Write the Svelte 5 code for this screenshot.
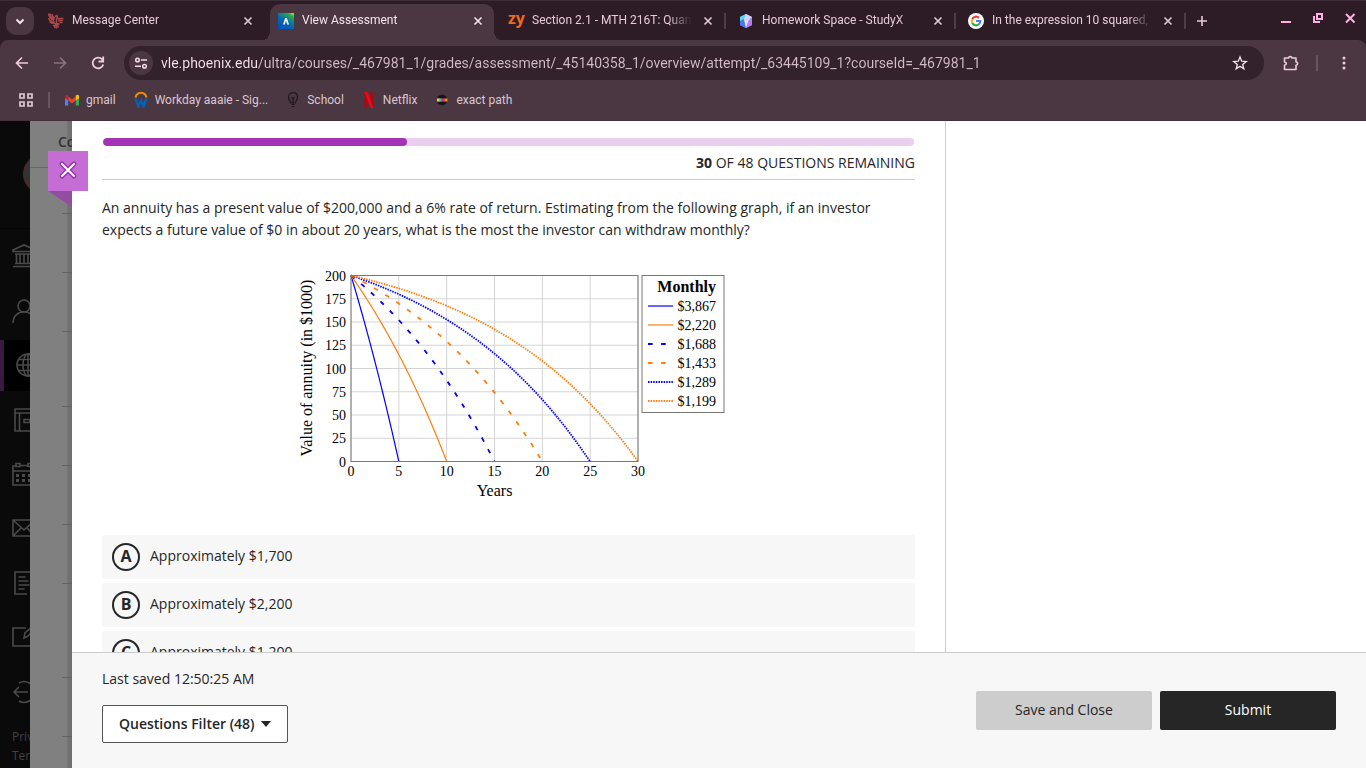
<script>
  const tabs = [
    { title: "Message Center", icon: "phoenix" },
    { title: "View Assessment", icon: "ultra", active: true },
    { title: "Section 2.1 - MTH 216T: Quan", icon: "zy", line: true },
    { title: "Homework Space - StudyX", icon: "studyx", line: true },
    { title: "In the expression 10 squared,", icon: "google", line: true },
  ];

  const bookmarks = [
    { label: "gmail", icon: "gmail" },
    { label: "Workday aaaie - Sig...", icon: "workday" },
    { label: "School", icon: "school" },
    { label: "Netflix", icon: "netflix" },
    { label: "exact path", icon: "exact" },
  ];

  const railItems = ["Institution", "Profile", "Courses", "Organizations", "Calendar", "Messages", "Grades", "Tools", "Sign Out"];
  const rowHeights = [46, 59, 59, 75, 59, 59, 59, 94, 59];

  const answers = [
    { letter: "A", text: "Approximately $1,700" },
    { letter: "B", text: "Approximately $2,200" },
    { letter: "C", text: "Approximately $1,200" },
  ];

  const total = 48;
  const remaining = 30;
  const done = ((total - remaining) / total) * 100;

  let url = "vle.phoenix.edu/ultra/courses/_467981_1/grades/assessment/_45140358_1/overview/attempt/_63445109_1?courseId=_467981_1";
  let selected = "";

  // plot area inside the chart svg
  const left = 57;
  const top = 7.5;
  const width = 287;
  const height = 186;
  const xTicks = [0, 5, 10, 15, 20, 25, 30];
  const yTicks = [0, 25, 50, 75, 100, 125, 150, 175, 200];

  const px = (years) => left + (years / 30) * width;
  const py = (value) => top + height - (value / 200) * height;

  const series = [
    { label: "$3,867", payment: 3867, years: 5, color: "blue", kind: "solid" },
    { label: "$2,220", payment: 2220, years: 10, color: "orange", kind: "solid" },
    { label: "$1,688", payment: 1688, years: 15, color: "blue", kind: "dashed" },
    { label: "$1,433", payment: 1433, years: 20, color: "orange", kind: "dashed" },
    { label: "$1,289", payment: 1289, years: 25, color: "blue", kind: "dotted" },
    { label: "$1,199", payment: 1199, years: 30, color: "orange", kind: "dotted" },
  ];

  // balance (in $1000) after monthly withdrawals at 6% a year
  function balance(payment, years) {
    const growth = Math.pow(1.005, years * 12);
    return 200 * growth - ((payment / 1000) * (growth - 1)) / 0.005;
  }

  function curve(s) {
    let d = "";
    for (let i = 0; i <= 60; i++) {
      const t = (s.years * i) / 60;
      const y = Math.max(0, balance(s.payment, t));
      d += (i ? "L" : "M") + px(t).toFixed(2) + " " + py(y).toFixed(2);
    }
    return d;
  }
</script>

<div class="browser">
  <header>
    <div class="tabstrip">
      <button class="search-tabs" aria-label="Search tabs">
        <svg width="16" height="16" viewBox="0 0 16 16"><path d="M4.5 6.5L8 10l3.500-3.500" fill="none" stroke="#f7dfea" stroke-width="2" /></svg>
      </button>
      {#each tabs as tab}
        <div class="tab" class:active={tab.active} class:line={tab.line}>
          {#if tab.icon === "phoenix"}
            <svg width="16" height="16" viewBox="0 0 16 16" fill="none" stroke="#a8484b">
              <path d="M.5.5C1 4 2.500 6 6 7.500M2 .5c0 3 2 5 4.500 5.500M4 1c0 2 1.500 3.500 3 4M.5 5c1 3 3 4 6 4M1.500 8.500c1.500 2 3 2 5.500 1.500M7 3.500l2-1 .5 2-1 1.500v4l3 1.500M15.500 5.500h-4.500v3M15 7.500h-3M14.500 9.500h-3M8 10l-1.500 5M8.500 10.500v5M9 11l1.500 3.500M5 12.500h5" stroke-width="1.500" />
            </svg>
          {:else if tab.icon === "ultra"}
            <svg width="16" height="16" viewBox="0 0 16 16">
              <defs>
                <linearGradient id="ultra" x1="1" y1="0" x2=".3" y2="1">
                  <stop offset="0" stop-color="#d4e21f" /><stop offset=".2" stop-color="#2da84f" /><stop offset=".6" stop-color="#0569b3" /><stop offset="1" stop-color="#0052b8" />
                </linearGradient>
              </defs>
              <rect width="16" height="16" fill="url(#ultra)" />
              <path d="M5 11.500L7.200 5h1.600L11 11.500H9.200L8 7.500l-1.200 4z" fill="#fff" />
            </svg>
          {:else if tab.icon === "zy"}
            <span class="zy">zy</span>
          {:else if tab.icon === "studyx"}
            <svg width="16" height="16" viewBox="0 0 16 16">
              <path d="M8 1l6 3v8l-6 3-6-3V4z" fill="#a99cf4" />
              <path d="M8 1L2 4v5l4-3z" fill="#48e0ee" />
              <path d="M2 8v4l6 3-2-9z" fill="#4a78ee" />
              <path d="M8 1l6 3-3 3-5-1z" fill="#cfd8ff" />
              <path d="M6 6l5 1-3 8z" fill="#e8dcff" />
              <path d="M14 4v8l-6 3 3-8z" fill="#b57df0" />
            </svg>
          {:else}
            <svg width="16" height="16" viewBox="0 0 16 16" fill="none" stroke-width="2.200">
              <circle cx="8" cy="8" r="8" fill="#fff" />
              <path d="M4.200 6A4.300 4.300 0 0 1 11 4.900" stroke="#ea4335" />
              <path d="M4.200 10A4.300 4.300 0 0 1 4.200 6" stroke="#fbbc05" />
              <path d="M4.200 10A4.300 4.300 0 0 0 10.900 11.200" stroke="#34a853" />
              <path d="M10.700 11.400A4.300 4.300 0 0 0 12.300 8H8" stroke="#4285f4" />
            </svg>
          {/if}
          <span class="title">{tab.title}</span>
          <button class="close-tab" aria-label="Close tab">
            <svg width="16" height="16" viewBox="0 0 16 16"><path d="M4.500 4.500l7 7m0-7l-7 7" stroke="currentColor" stroke-width="1.600" /></svg>
          </button>
        </div>
      {/each}
      <button class="new-tab" aria-label="New tab">
        <svg width="16" height="16" viewBox="0 0 16 16"><path d="M8 3v10M3 8h10" stroke="#efc8da" stroke-width="1.600" /></svg>
      </button>
      <div class="window-buttons">
        <button aria-label="Minimize"><svg width="16" height="16" viewBox="0 0 16 16"><path d="M3 12h10" stroke="#ffb1e2" stroke-width="2" /></svg></button>
        <button aria-label="Restore">
          <svg width="16" height="16" viewBox="0 0 16 16" fill="none" stroke="#ffb1e2" stroke-width="2"><path d="M7 4h5v5H7zM4 6v6h6" /></svg>
        </button>
        <button aria-label="Close"><svg width="16" height="16" viewBox="0 0 16 16"><path d="M4 4l8.500 8.500m0-8.500L4 12.500" stroke="#ffb1e2" stroke-width="2" /></svg></button>
      </div>
    </div>

    <div class="toolbar">
      <button aria-label="Back">
        <svg width="16" height="16" viewBox="0 0 16 16" fill="none" stroke="#efcbdc" stroke-width="1.700"><path d="M14 8H3m5-5.500L2.500 8 8 13.500" /></svg>
      </button>
      <button aria-label="Forward">
        <svg width="16" height="16" viewBox="0 0 16 16" fill="none" stroke="#8d7281" stroke-width="1.700"><path d="M2 8h11M8 2.500L13.500 8 8 13.500" /></svg>
      </button>
      <button aria-label="Reload">
        <svg width="16" height="16" viewBox="0 0 16 16" fill="none" stroke="#efcbdc" stroke-width="1.800"><path d="M13.300 9.500A5.400 5.400 0 1 1 12 4.200L13 5.500M13.200 1.500v5H8.500" /></svg>
      </button>
      <div class="omnibox">
        <button class="site-info" aria-label="View site information">
          <svg width="16" height="16" viewBox="0 0 16 16" fill="none" stroke="#f2dce6" stroke-width="1.500">
            <circle cx="4.500" cy="5" r="1.800" /><path d="M8 5h6M2 11.300h6" /><circle cx="11.500" cy="11.300" r="1.800" />
          </svg>
        </button>
        <input type="text" aria-label="Address" spellcheck="false" bind:value={url} />
        <button aria-label="Bookmark this tab">
          <svg width="16" height="16" viewBox="0 0 16 16" fill="none" stroke="#f2dce6" stroke-width="1.400"><path d="M8 2l1.700 4.200 4.500.3-3.500 2.900 1.100 4.400L8 11.400l-3.800 2.400 1.100-4.400L1.800 6.500l4.500-.3z" /></svg>
        </button>
      </div>
      <button class="puzzle" aria-label="Extensions">
        <svg width="18" height="18" viewBox="0 0 18 18"><path d="M2.500 4h4.200c0-2 3.100-2 3.100 0h4.200v4c2.200 0 2.200 3.200 0 3.200V15.500H2.500v-4.200c2.400-.6 2.400-2.800 0-3.300z" fill="none" stroke="#efcbdc" stroke-width="1.600" stroke-linejoin="round" /></svg>
      </button>
      <span class="divider"></span>
      <button aria-label="Menu">
        <svg width="16" height="16" viewBox="0 0 16 16" fill="#efcbdc"><circle cx="8" cy="3" r="1.500" /><circle cx="8" cy="8" r="1.500" /><circle cx="8" cy="13" r="1.500" /></svg>
      </button>
    </div>

    <nav class="bookmarks" aria-label="Bookmarks">
      <button aria-label="All apps">
        <svg width="16" height="16" viewBox="0 0 16 16" fill="none" stroke="#dccbd4" stroke-width="1.700"><path d="M2 2h4v4H2zM10 2h4v4h-4zM2 10h4v4H2zM10 10h4v4h-4z" /></svg>
      </button>
      <span class="divider"></span>
      {#each bookmarks as mark}
        <a href="#bookmark">
          <svg width="16" height="16" viewBox="0 0 16 16" aria-hidden="true">
            {#if mark.icon === "gmail"}
              <path d="M1 4v9.500h3.200V7.500z" fill="#4285f4" />
              <path d="M15 4v9.500h-3.200V7.500z" fill="#34a853" />
              <path d="M4.200 4.500L8 7.400l3.800-2.900v4L8 11.400 4.200 8.500z" fill="#ea4335" />
              <path d="M1 4.200C1 2.500 2.700 2.200 4.200 3.500v5L1 6.200z" fill="#c5221f" />
              <path d="M15 4.200c0-1.700-1.700-2-3.200-.7v5L15 6.200z" fill="#fbbc04" />
            {:else if mark.icon === "workday"}
              <path d="M2.500 5.500C4-.8 12-.8 13.500 5.500" fill="none" stroke="#f38b00" stroke-width="2" />
              <path d="M2.500 6.500l2.800 8L8 8.500l2.700 6 2.800-8" fill="none" stroke="#0063bf" stroke-width="2.300" />
            {:else if mark.icon === "school"}
              <path d="M6 11C5 8.500 3.500 8 3.500 5.200 3.500-.8 12.500-.8 12.500 5.200c0 2.800-1.500 3.300-2.500 5.800zM6.500 12.500h3M6.800 14.500h2.400M8 11V6M6.500 5l1.500 2 1.500-2" fill="none" stroke="#1f171b" stroke-width="1.200" />
            {:else if mark.icon === "netflix"}
              <path d="M3.500 0v16h3V0zM9.500 0v16h3V0z" fill="#b1060f" />
              <path d="M3.500 0h3l6 16h-3z" fill="#f40612" />
            {:else}
              <path d="M3 6.500a5.200 5.200 0 0 1 10 0zM3 9.500a5.200 5.200 0 0 0 10 0z" fill="#191317" />
              <path d="M3 6.500h3v3H3z" fill="#f7d038" /><path d="M5 6.500h3v3H5z" fill="#29bbe3" /><path d="M7.500 6.500h3v3h-3z" fill="#e0287d" /><path d="M10.500 6.500h3v3h-3z" fill="#f58220" />
            {/if}
          </svg>
          {mark.label}
        </a>
      {/each}
    </nav>
  </header>

  <div class="page">
    <aside class="rail">
      <div class="rail-top"><span class="avatar"></span></div>
      <nav class="rail-nav" aria-label="Main">
        {#each railItems as item, i}
          <div class="rail-row">
            <a href="#nav" class:current={i === 2} aria-label={item}>
              <svg width="24" height="24" viewBox="0 0 24 24" fill="none" stroke="#4a4a4a" stroke-width="1.600">
                {#if i === 0}
                  <path d="M1 6l11-5 11 5v1.500H1zM3 10h18M4.500 10v9M8 10v9M12 10v9M16 10v9M20 10v9M3 19.500h18M1 22.500h22" />
                {:else if i === 1}
                  <circle cx="12" cy="7" r="6" /><path d="M1 24c0-15 22-15 22 0" />
                {:else if i === 2}
                  <circle cx="12" cy="12" r="11" /><ellipse cx="12" cy="12" rx="5" ry="11" /><path d="M1 12h22M12 1v22M3 6.500h18M3 17.500h18" />
                {:else if i === 3}
                  <path d="M3 1h20v22H3zM3 5h20M7.500 5v18M12 11.500h6v3h-6z" />
                {:else if i === 4}
                  <path d="M4 4H1v19h22V4h-3M1 9h22M4 1.500h4v3H4zM16 1.500h4v3h-4zM8 3.500h8" /><path d="M4 13.500h16M4 18.500h16" stroke-width="3" stroke-dasharray="3 3" />
                {:else if i === 5}
                  <path d="M1 4h22v16H1zM1 4l11 10L23 4M1 20l8-8M23 20l-8-8" />
                {:else if i === 6}
                  <path d="M15 23H3V1h18v17M6.500 6h7M6.500 10h10M6.500 14h11M6.500 18h6" />
                {:else if i === 7}
                  <path d="M14 3H1v18h20V12M12 13l1-5 8-7 2 2-7 8z" />
                {:else}
                  <path d="M16 12H2m5-5l-5 5 5 5M7 3c6-4 16 1 16 9s-10 13-16 9" />
                {/if}
              </svg>
            </a>
          </div>
        {/each}
      </nav>
      <div class="rail-links"><a href="#privacy">Privacy</a><a href="#terms">Terms</a></div>
    </aside>

    <div class="behind">
      <div class="behind-head">Course</div>
      {#each rowHeights as h}
        <div class="behind-row" style="height: {h}px"></div>
      {/each}
    </div>

    <main class="panel">
      <button class="close-panel" aria-label="Close">
        <svg width="24" height="24" viewBox="0 0 24 24" stroke-linecap="round">
          <path d="M6 5l12 12M18 5L6 17" stroke="#9a35b4" stroke-width="5" /><path d="M6 5l12 12M18 5L6 17" stroke="#fff" stroke-width="2" />
        </svg>
      </button>
      <div class="columns">
        <section class="content">
          <div class="progress"><div class="bar" style="width: {done}%"></div></div>
          <p class="count"><b>{remaining}</b> OF {total} QUESTIONS REMAINING</p>
          <p class="question">An annuity has a present value of $200,000 and a 6% rate of return. Estimating from the following graph, if an investor expects a future value of $0 in about 20 years, what is the most the investor can withdraw monthly?</p>

          <svg class="chart" width="430" height="240" viewBox="0 0 430 240">
            <g class="grid">
              {#each xTicks as x}<path d="M{px(x)} {top}v{height}" />{/each}
              {#each yTicks as y}<path d="M{left} {py(y)}h{width}" />{/each}
            </g>
            {#each series as s}
              <path class="curve {s.color} {s.kind}" d={curve(s)} />
            {/each}
            <rect class="frame" x={left} y={top} {width} {height} />
            {#each xTicks as x}<text x={px(x)} y="208" text-anchor="middle">{x}</text>{/each}
            {#each yTicks as y}<text x={left - 5} y={py(y) + 5} text-anchor="end">{y}</text>{/each}
            <text class="axis" x={left + width / 2} y="228" text-anchor="middle">Years</text>
            <text class="axis" transform="translate(18 100) rotate(-90)" text-anchor="middle">Value of annuity (in $1000)</text>

            <rect class="frame" x="348" y="7.500" width="82" height="137" />
            <text class="legend-title" x="422" y="24" text-anchor="end">Monthly</text>
            {#each series as s, i}
              <path class="curve {s.color} {s.kind}" d="M354 {38 + i * 19}h25" />
              <text x="422" y={43 + i * 19} text-anchor="end">{s.label}</text>
            {/each}
          </svg>

          <div class="answers">
            {#each answers as a}
              <label>
                <span class="choice">
                  <input type="radio" name="answer" value={a.letter} bind:group={selected} />
                  <b>{a.letter}</b>
                </span>
                <span class="answer-text">{a.text}</span>
              </label>
            {/each}
          </div>
        </section>
        <div class="side"></div>
      </div>

      <footer>
        <div>
          <p>Last saved 12:50:25 AM</p>
          <button class="filter" aria-haspopup="true">
            Questions Filter (48)
            <svg width="10" height="6" viewBox="0 0 10 6"><path d="M0 0h10L5 6z" fill="#262626" /></svg>
          </button>
        </div>
        <div class="actions">
          <button class="save">Save and Close</button>
          <button class="submit">Submit</button>
        </div>
      </footer>
    </main>
  </div>
</div>

<style>
  :global(body) {
    margin: 0;
    overflow: hidden;
  }

  button {
    padding: 0;
    border: none;
    background: none;
    color: inherit;
    font: inherit;
    cursor: pointer;
  }

  svg {
    display: block;
    flex: none;
  }

  a {
    color: inherit;
    text-decoration: none;
  }

  p {
    margin: 0;
  }

  .browser {
    display: flex;
    flex-direction: column;
    height: 100vh;
    font-family: "Open Sans", "Noto Sans", sans-serif;
    font-size: 14px;
    line-height: 22px;
    color: #262626;
  }

  header {
    background: #2d1b26;
    font-family: Roboto, "Liberation Sans", sans-serif;
    font-size: 12px;
    line-height: 16px;
    color: #e5cbd8;
  }

  .tabstrip {
    display: flex;
    align-items: center;
    box-sizing: border-box;
    height: 40px;
    padding: 0 8px 0 6px;
    border-top: 1px solid #3d2b36;
  }

  .search-tabs {
    display: grid;
    place-items: center;
    flex: none;
    width: 28px;
    height: 28px;
    margin-right: 2px;
    border-radius: 10px;
    background: #4b3741;
  }

  .tab {
    position: relative;
    display: flex;
    align-items: center;
    gap: 8px;
    flex: 0 1 230px;
    min-width: 0;
    box-sizing: border-box;
    height: 34px;
    padding: 0 10px 0 12px;
    z-index: 1;
  }

  .tab.active {
    color: #f7e3ec;
  }

  .tab.active::before {
    content: "";
    position: absolute;
    z-index: -1;
    inset: 0 2px -3px 4px;
    border-radius: 10px 10px 0 0;
    background: #4b3741;
  }

  .tab.active::after {
    content: "";
    position: absolute;
    z-index: -1;
    left: -6px;
    right: -8px;
    bottom: -3px;
    height: 10px;
    background:
      radial-gradient(circle at 0 0, transparent 10px, #4b3741 10px) left / 10px 10px no-repeat,
      radial-gradient(circle at 100% 0, transparent 10px, #4b3741 10px) right / 10px 10px no-repeat;
  }

  .tab.line {
    background: linear-gradient(#4f3c47, #4f3c47) right center / 2px 16px no-repeat;
  }

  .title {
    flex: 1;
    padding-bottom: 2px;
    overflow: hidden;
    white-space: nowrap;
    mask-image: linear-gradient(to left, transparent, #000 24px);
  }

  .zy {
    width: 16px;
    padding-bottom: 6px;
    font-family: "Open Sans", sans-serif;
    font-size: 16px;
    font-weight: 700;
    line-height: 16px;
    color: #ee6a1f;
  }

  .new-tab {
    margin-left: 8px;
  }

  .window-buttons {
    display: flex;
    gap: 16px;
    margin: 0 0 6px auto;
  }

  .toolbar {
    display: flex;
    align-items: center;
    padding: 6px 14px;
    border-radius: 8px 8px 0 0;
    background: #4b3741;
    gap: 22px;
  }

  .omnibox {
    display: flex;
    align-items: center;
    flex: 1;
    height: 34px;
    margin-left: -4px;
    padding: 0 16px 0 5px;
    border-radius: 17px;
    background: #33212c;
  }

  .site-info {
    display: grid;
    place-items: center;
    width: 24px;
    height: 24px;
    border-radius: 12px;
    background: #4b3741;
  }

  .omnibox input {
    flex: 1;
    min-width: 0;
    padding: 0;
    margin: 0 8px;
    border: none;
    outline: none;
    font-family: Roboto, "Liberation Sans", sans-serif;
    font-size: 14px;
    line-height: 20px;
    color: transparent;
    background: linear-gradient(to right, #f9e2ec 98px, #d3bcc8 98px);
    background-clip: text;
  }

  .puzzle {
    margin-left: -4px;
  }

  .divider {
    width: 2px;
    height: 16px;
    background: #6a5460;
  }

  .toolbar .divider {
    margin: 0 -4px 0 -6px;
  }

  .bookmarks {
    display: flex;
    align-items: center;
    gap: 17px;
    height: 28px;
    padding: 0 18px 6px;
    border-bottom: 1px solid #44313b;
    background: #4b3741;
    color: #dac6d0;
  }

  .bookmarks .divider {
    margin: 0 -3px;
  }

  .bookmarks a {
    display: flex;
    align-items: center;
    gap: 6px;
    white-space: nowrap;
  }

  .page {
    display: flex;
    flex: 1;
    min-height: 0;
  }

  .rail {
    display: flex;
    flex-direction: column;
    flex: none;
    width: 30px;
    overflow: hidden;
    background: #0a0a0a;
    color: #424242;
  }

  .rail-top {
    box-sizing: border-box;
    height: 108px;
    padding: 33px 0 0 23px;
    border-bottom: 1px solid #060606;
  }

  .avatar {
    display: block;
    box-sizing: border-box;
    width: 40px;
    height: 40px;
    border: 1px solid #5c2622;
    border-radius: 50%;
    background: #333;
  }

  .rail-nav {
    display: flex;
    flex-direction: column;
    flex: 1;
  }

  .rail-row {
    display: flex;
    align-items: center;
    flex: 1;
  }

  .rail-row a {
    display: flex;
    align-items: center;
    width: 80px;
    height: 51px;
    padding-left: 12px;
  }

  .rail-row a.current {
    border-left: 4px solid #3b1a42;
    background: #000;
  }

  .rail-links {
    display: flex;
    flex-direction: column;
    height: 41px;
    padding: 8px 0 0 12px;
    font-size: 12px;
    line-height: 19px;
  }

  .behind {
    flex: none;
    width: 42px;
    overflow: hidden;
    background: linear-gradient(to left, #6e6e6e, #747474 5px, #808080 5px);
  }

  .behind-head {
    box-sizing: border-box;
    height: 47px;
    padding: 10px 0 0 28px;
    border-bottom: 1px solid #666;
    font-weight: 600;
    color: #333;
  }

  .behind-row {
    box-sizing: border-box;
    margin-left: 32px;
    border-bottom: 1px solid #626262;
  }

  .panel {
    position: relative;
    display: flex;
    flex-direction: column;
    flex: 1;
    min-width: 0;
    background: #fff;
  }

  .close-panel {
    position: absolute;
    z-index: 1;
    top: 30px;
    left: -24px;
    display: grid;
    place-items: center;
    width: 40px;
    height: 40px;
    background: #c56dd5;
  }

  .close-panel::after {
    content: "";
    position: absolute;
    top: 40px;
    left: 0;
    width: 24px;
    height: 16px;
    background: #944ca1;
    clip-path: polygon(0 0, 100% 0, 100% 100%);
  }

  .columns {
    display: flex;
    flex: 1;
    min-height: 0;
  }

  .content {
    flex: 1;
    padding: 17px 30px 0;
    overflow: hidden;
  }

  .side {
    flex: none;
    width: 420px;
    border-left: 1px solid #ccc;
  }

  .progress {
    height: 8px;
    margin: 0 1px;
    border-radius: 4px;
    overflow: hidden;
    background: #ebcff0;
  }

  .bar {
    height: 100%;
    border-radius: 4px;
    background: #a234b5;
  }

  .count {
    padding: 6px 0 5px;
    border-bottom: 1px solid #ccc;
    text-align: right;
  }

  .question {
    margin-top: 17px;
  }

  .chart {
    margin: 27px auto;
    font-family: "Liberation Serif", serif;
    font-size: 14px;
    fill: #000;
    overflow: visible;
  }

  .grid {
    stroke: #d4d4d4;
    stroke-width: 1;
  }

  .frame {
    fill: none;
    stroke: #777;
    stroke-width: 1;
  }

  .axis {
    font-size: 16px;
  }

  .legend-title {
    font-size: 16px;
    font-weight: 700;
  }

  .curve {
    fill: none;
    stroke-width: 1.2;
  }

  .blue {
    stroke: #0000ff;
  }

  .orange {
    stroke: #ff7f0e;
  }

  .dashed {
    stroke-width: 1.8;
    stroke-dasharray: 4.6 8.5;
  }

  .dotted {
    stroke-width: 1.8;
    stroke-dasharray: 1.5 1.1;
  }

  .answers {
    display: flex;
    flex-direction: column;
    gap: 4px;
  }

  .answers label {
    display: flex;
    align-items: center;
    gap: 10px;
    height: 44px;
    padding: 0 10px;
    border-radius: 2px;
    background: #f7f7f7;
  }

  .answer-text {
    padding-bottom: 2px;
  }

  .choice {
    display: grid;
    place-items: center;
  }

  .choice > * {
    grid-area: 1 / 1;
  }

  .choice input {
    appearance: none;
    box-sizing: border-box;
    width: 28px;
    height: 28px;
    margin: 0;
    border: 2px solid #262626;
    border-radius: 50%;
  }

  .choice b {
    padding-bottom: 2px;
    font-size: 16px;
    pointer-events: none;
  }

  footer {
    display: flex;
    justify-content: space-between;
    align-items: center;
    padding: 15px 30px 25px;
    border-top: 1px solid #ccc;
    background: #f7f7f7;
  }

  .filter {
    display: flex;
    align-items: center;
    gap: 6px;
    height: 38px;
    margin-top: 15px;
    padding: 0 16px;
    border: 1px solid #555;
    border-radius: 2px;
    background: #fff;
    font-weight: 600;
  }

  .actions {
    display: flex;
    gap: 8px;
    margin-top: 10px;
  }

  .actions button {
    width: 176px;
    height: 39px;
    padding-bottom: 2px;
    border-radius: 2px;
  }

  .save {
    background: #cdcdcd;
  }

  .submit {
    background: #262626;
    color: #fff;
  }
</style>
